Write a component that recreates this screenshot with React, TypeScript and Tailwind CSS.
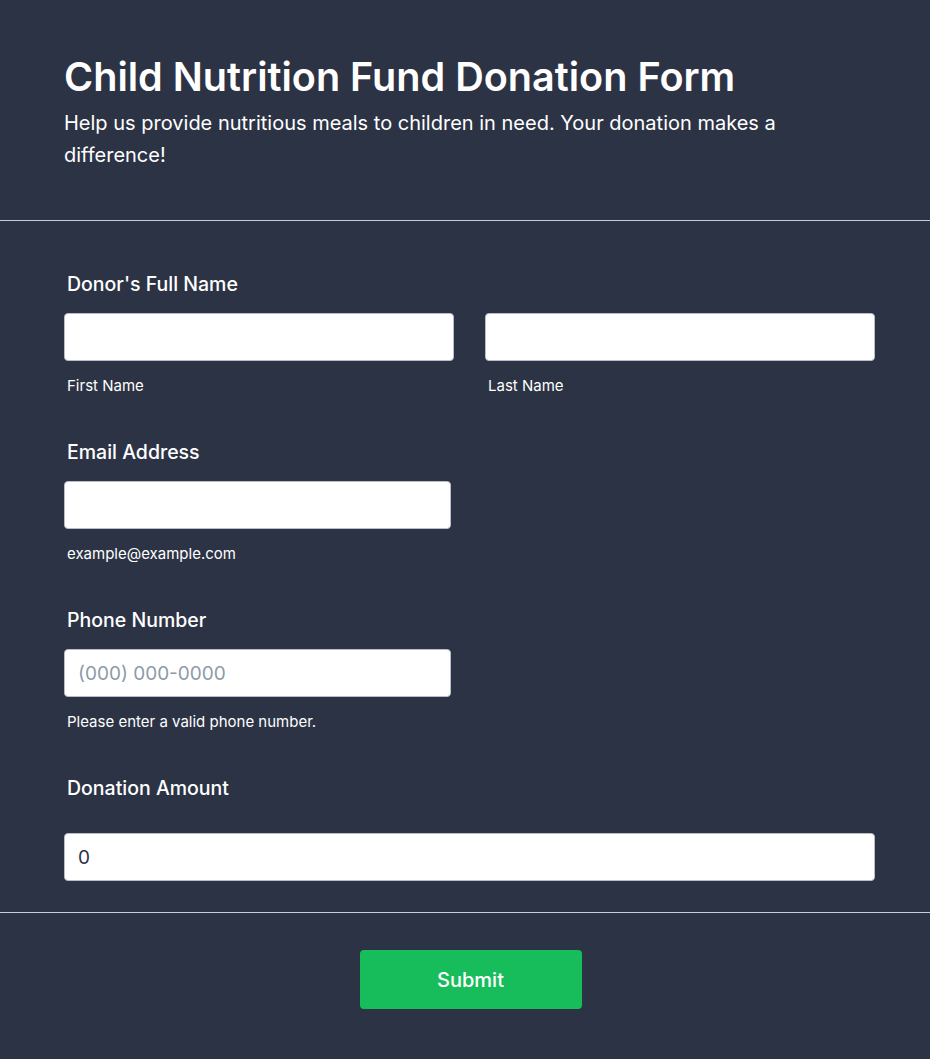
const inputClass =
  'h-12 w-full rounded border border-[#b8bdc9] bg-white px-[13px] text-[19px] text-[#2c3345] placeholder:text-[#8d9aa8] outline-none'

interface FieldProps {
  label: string
  sublabel?: string
  children: React.ReactNode
}

function Field({ label, sublabel, children }: FieldProps) {
  return (
    <div className="pb-[42px]">
      <label className="block pl-[3px] text-[19.5px] leading-7 font-medium text-white">{label}</label>
      <div className="mt-[15px]">{children}</div>
      {sublabel && <div className="mt-[15px] pl-[3px] text-[15px] leading-5 text-white">{sublabel}</div>}
    </div>
  )
}

export default function App() {
  return (
    <div className="min-h-[1059px] bg-[#2c3345] font-['Inter',sans-serif] text-white">
      <header className="pb-[49px] pl-16 pr-[55px] pt-[51px]">
        <h1 className="text-[39.6px] leading-[52px] font-semibold">Child Nutrition Fund Donation Form</h1>
        <p className="mt-[4px] text-[20px] leading-8">
          Help us provide nutritious meals to children in need. Your donation makes a difference!
        </p>
      </header>

      <div className="h-px bg-[#c8ced9]" />

      <form className="pl-16 pr-[55px] pt-[49px]">
        <Field label="Donor's Full Name">
          <div className="grid grid-cols-2 gap-[31px]">
            <div>
              <input className={inputClass} />
              <div className="mt-[15px] pl-[3px] text-[15px] leading-5">First Name</div>
            </div>
            <div>
              <input className={inputClass} />
              <div className="mt-[15px] pl-[3px] text-[15px] leading-5">Last Name</div>
            </div>
          </div>
        </Field>

        <Field label="Email Address" sublabel="example@example.com">
          <input type="email" className={`${inputClass} max-w-[387px]`} />
        </Field>

        <Field label="Phone Number" sublabel="Please enter a valid phone number.">
          <input type="tel" placeholder="(000) 000-0000" className={`${inputClass} max-w-[387px]`} />
        </Field>

        <div className="pb-[31px]">
          <label className="block pl-[3px] text-[19.5px] leading-7 font-medium">Donation Amount</label>
          <input defaultValue="0" className={`${inputClass} mt-[31px]`} />
        </div>
      </form>

      <div className="h-px bg-[#c8ced9]" />

      <div className="flex justify-center pb-[50px] pl-[66px] pr-[55px] pt-[37px]">
        <button
          type="button"
          className="h-[59px] w-[222px] rounded bg-[#18bd5b] text-[20px] font-medium text-white"
        >
          Submit
        </button>
      </div>
    </div>
  )
}
